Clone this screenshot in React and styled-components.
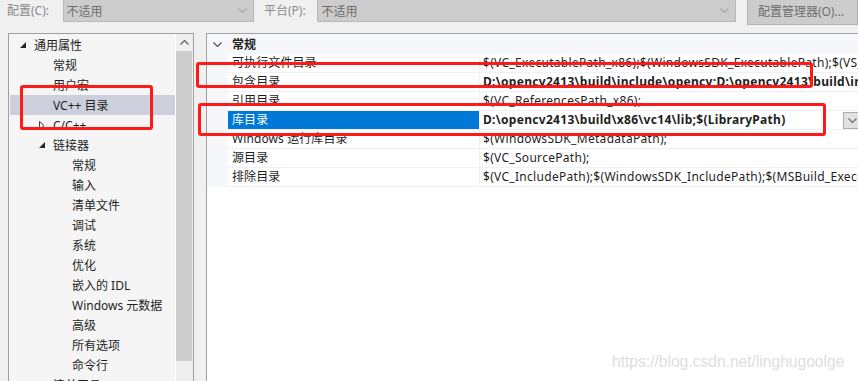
import React from 'react';
import styled, { createGlobalStyle } from 'styled-components';

const GlobalStyle = createGlobalStyle`
  html, body {
    margin: 0;
    padding: 0;
    background: #f0f0f0;
    overflow: hidden;
  }
`;

const FONT = `"Noto Sans", "Noto Sans CJK SC", sans-serif`;

const Page = styled.div`
  position: relative;
  width: 858px;
  height: 381px;
  overflow: hidden;
  background: #f0f0f0;
  font-family: ${FONT};
  font-size: 12px;
  color: #1e1e1e;
`;

const TopBar = styled.div`
  display: flex;
  align-items: flex-start;
  height: 25px;
`;

const Label = styled.div`
  color: #8a8a8a;
  line-height: 22px;
  margin-left: ${p => p.$left}px;
  width: ${p => p.$width}px;
  white-space: nowrap;
`;

const Combo = styled.div`
  box-sizing: border-box;
  display: flex;
  align-items: center;
  justify-content: space-between;
  width: ${p => p.$width}px;
  height: 23px;
  margin-top: -1px;
  padding: 0 6px 0 3px;
  background: #cccccc;
  border: 1px solid #b9b9b9;
  color: #6d6d6d;
`;

const ManagerButton = styled.div`
  box-sizing: border-box;
  margin-left: 11px;
  margin-top: -1px;
  height: 26px;
  width: 112px;
  padding-left: 10px;
  line-height: 24px;
  background: #cccccc;
  border: 1px solid #b4b4b4;
  color: #6d6d6d;
  white-space: nowrap;
`;

const Body = styled.div`
  display: flex;
  margin-top: 8px;
`;

const TreePanel = styled.div`
  box-sizing: border-box;
  display: flex;
  margin-left: 8px;
  width: 186px;
  height: 360px;
  border: 1px solid #a0a0a0;
  background: #f5f5f5;
`;

const TreeList = styled.div`
  width: 166px;
  padding-top: 1px;
`;

const TreeRow = styled.div`
  display: flex;
  align-items: center;
  height: 20px;
  margin-left: 1px;
  padding-left: ${p => 10 + p.$level * 19}px;
  background: ${p => (p.$selected ? '#cdd0dc' : 'transparent')};
  white-space: nowrap;
`;

const Expander = styled.span`
  display: flex;
  align-items: center;
  width: 14px;
  height: 20px;
`;

const Scrollbar = styled.div`
  display: flex;
  flex-direction: column;
  width: 17px;
  background: #efefef;
  border-left: 1px solid #ffffff;
`;

const ScrollArrow = styled.div`
  display: flex;
  align-items: center;
  justify-content: center;
  height: 17px;
`;

const ScrollThumb = styled.div`
  width: 16px;
  height: 310px;
  background: #cdcdcd;
`;

const Grid = styled.div`
  flex: 1;
  margin-left: 12px;
  margin-right: -4px;
  height: 360px;
  border-left: 1px solid #a0a0a0;
  border-top: 1px solid #a0a0a0;
  background: #ffffff;
`;

const GroupHeader = styled.div`
  display: flex;
  align-items: center;
  height: 20px;
  background: #f5f7fa;
  font-weight: bold;
`;

const GroupToggle = styled.span`
  display: flex;
  justify-content: center;
  width: 21px;
  margin-right: 4px;
`;

const PropRow = styled.div`
  display: grid;
  grid-template-columns: 21px 252px 1fr;
  height: 19px;
`;

const Gutter = styled.div`
  background: #f5f7fa;
`;

const NameCell = styled.div`
  box-sizing: border-box;
  padding-left: 4px;
  line-height: 18px;
  letter-spacing: 0.1px;
  border-bottom: 1px solid #eef1f5;
  border-right: 1px solid #eef1f5;
  background: ${p => (p.$selected ? '#0078d7' : '#ffffff')};
  color: ${p => (p.$selected ? '#ffffff' : '#1e1e1e')};
  white-space: nowrap;
  overflow: hidden;
`;

const ValueCell = styled.div`
  box-sizing: border-box;
  display: flex;
  align-items: center;
  min-width: 0;
  padding-left: 3px;
  border-bottom: 1px solid #eef1f5;
`;

const ValueText = styled.span`
  flex: 1;
  min-width: 0;
  overflow: hidden;
  white-space: nowrap;
  line-height: 18px;
  letter-spacing: 0.3px;
  font-weight: ${p => (p.$bold ? 'bold' : 'normal')};
`;

const DropButton = styled.div`
  box-sizing: border-box;
  display: flex;
  align-items: center;
  justify-content: center;
  width: 18px;
  height: 17px;
  margin-right: 1px;
  background: #e1e1e1;
  border: 1px solid #adadad;
`;

const Annotation = styled.div`
  position: absolute;
  box-sizing: border-box;
  left: ${p => p.$x}px;
  top: ${p => p.$y}px;
  width: ${p => p.$w}px;
  height: ${p => p.$h}px;
  border: 3px solid #ff1a1a;
  border-radius: 3px;
  pointer-events: none;
`;

const Watermark = styled.div`
  position: absolute;
  left: 612px;
  top: 353px;
  font-family: "Liberation Sans", Arial, sans-serif;
  font-size: 15.6px;
  color: #dedede;
  white-space: nowrap;
`;

const Chevron = ({ color = '#a8a8a8', up = false, w = 9, h = 5 }) => (
  <svg width={w} height={h} viewBox="0 0 9 5">
    <path
      d={up ? 'M0.5 4.5 L4.5 0.5 L8.5 4.5' : 'M0.5 0.5 L4.5 4.5 L8.5 0.5'}
      fill="none"
      stroke={color}
      strokeWidth="1.2"
    />
  </svg>
);

const OpenTriangle = () => (
  <svg width="6" height="6" viewBox="0 0 6 6">
    <polygon points="6,0 6,6 0,6" fill="#262626" />
  </svg>
);

const ClosedTriangle = () => (
  <svg width="6" height="9" viewBox="0 0 6 9">
    <polygon points="0.5,0.5 5,4.5 0.5,8.5" fill="none" stroke="#404040" />
  </svg>
);

const tree = [
  { level: 0, text: '通用属性', exp: 'open' },
  { level: 1, text: '常规' },
  { level: 1, text: '用户宏' },
  { level: 1, text: 'VC++ 目录', selected: true },
  { level: 1, text: 'C/C++', exp: 'closed' },
  { level: 1, text: '链接器', exp: 'open' },
  { level: 2, text: '常规' },
  { level: 2, text: '输入' },
  { level: 2, text: '清单文件' },
  { level: 2, text: '调试' },
  { level: 2, text: '系统' },
  { level: 2, text: '优化' },
  { level: 2, text: '嵌入的 IDL' },
  { level: 2, text: 'Windows 元数据' },
  { level: 2, text: '高级' },
  { level: 2, text: '所有选项' },
  { level: 2, text: '命令行' },
  { level: 1, text: '清单工具', exp: 'closed' },
];

const props = [
  { name: '可执行文件目录', value: '$(VC_ExecutablePath_x86);$(WindowsSDK_ExecutablePath);$(VS_ExecutablePath);$(MSBuild_ExecutablePath)' },
  { name: '包含目录', value: 'D:\\opencv2413\\build\\include\\opencv;D:\\opencv2413\\build\\include;$(IncludePath)', bold: true },
  { name: '引用目录', value: '$(VC_ReferencesPath_x86);' },
  { name: '库目录', value: 'D:\\opencv2413\\build\\x86\\vc14\\lib;$(LibraryPath)', bold: true, selected: true },
  { name: 'Windows 运行库目录', value: '$(WindowsSDK_MetadataPath);' },
  { name: '源目录', value: '$(VC_SourcePath);' },
  { name: '排除目录', value: '$(VC_IncludePath);$(WindowsSDK_IncludePath);$(MSBuild_ExecutablePath);$(VC_LibraryPath_x86)' },
];

export default function App() {
  return (
    <Page>
      <GlobalStyle />
      <TopBar>
        <Label $left={7} $width={56}>配置(C):</Label>
        <Combo $width={193}>
          <span>不适用</span>
          <Chevron />
        </Combo>
        <Label $left={10} $width={54}>平台(P):</Label>
        <Combo $width={422}>
          <span>不适用</span>
          <Chevron />
        </Combo>
        <ManagerButton>配置管理器(O)...</ManagerButton>
      </TopBar>
      <Body>
        <TreePanel>
          <TreeList>
            {tree.map((item, i) => (
              <TreeRow key={i} $level={item.level} $selected={item.selected}>
                <Expander>
                  {item.exp === 'open' && <OpenTriangle />}
                  {item.exp === 'closed' && <ClosedTriangle />}
                </Expander>
                {item.text}
              </TreeRow>
            ))}
          </TreeList>
          <Scrollbar>
            <ScrollArrow>
              <Chevron up color="#606060" w={9} h={5} />
            </ScrollArrow>
            <ScrollThumb />
          </Scrollbar>
        </TreePanel>
        <Grid>
          <GroupHeader>
            <GroupToggle>
              <Chevron color="#505050" />
            </GroupToggle>
            常规
          </GroupHeader>
          {props.map(p => (
            <PropRow key={p.name}>
              <Gutter />
              <NameCell $selected={p.selected}>{p.name}</NameCell>
              <ValueCell>
                <ValueText $bold={p.bold}>{p.value}</ValueText>
                {p.selected && (
                  <DropButton>
                    <Chevron color="#707070" />
                  </DropButton>
                )}
              </ValueCell>
            </PropRow>
          ))}
        </Grid>
      </Body>
      <Annotation $x={20} $y={85} $w={133} $h={45} />
      <Annotation $x={196} $y={62} $w={617} $h={26} />
      <Annotation $x={198} $y={103} $w={628} $h={33} />
      <Watermark>https://blog.csdn.net/linghugoolge</Watermark>
    </Page>
  );
}
